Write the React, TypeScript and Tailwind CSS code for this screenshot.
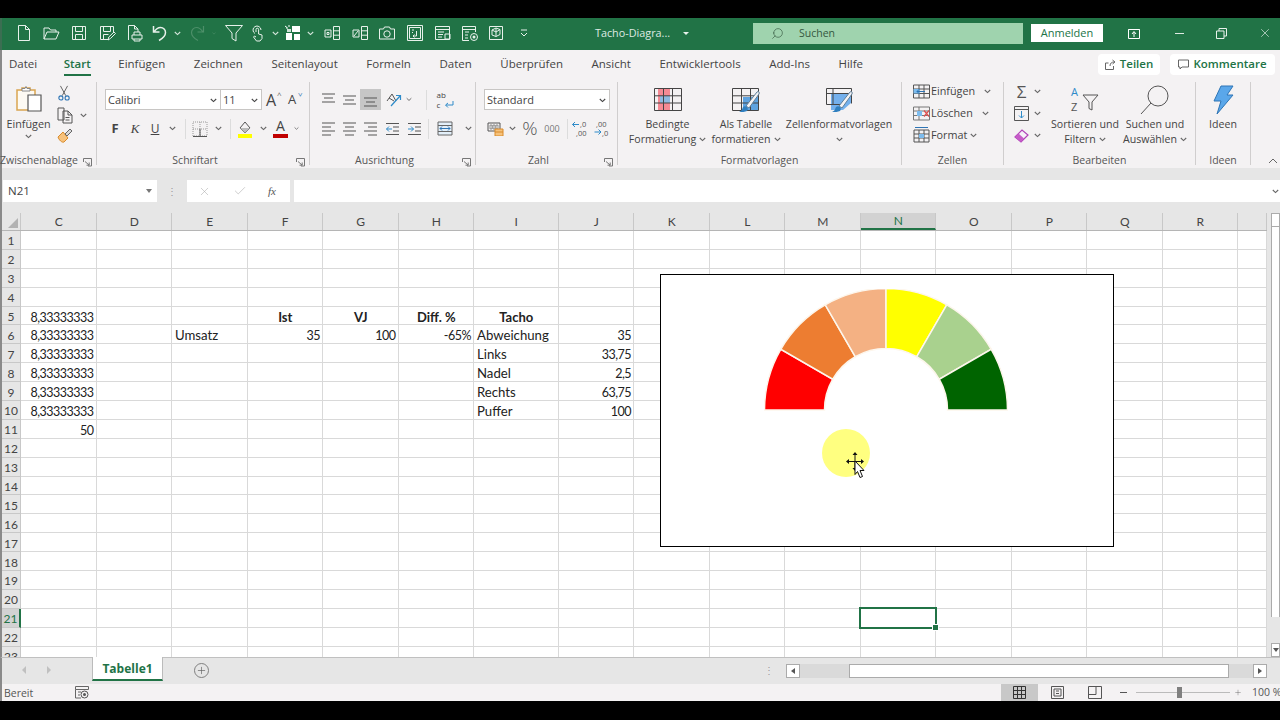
import type { ReactNode } from "react";
import { Check, Plus, Search, X } from "lucide-react";

const ui = "font-['Open_Sans','Noto_Sans',sans-serif]";
const sheetFont = "font-['Lato','Liberation_Sans',sans-serif]";

const columns = [
  { name: "C", cls: "w-[75.5px]" },
  { name: "D", cls: "w-[75.5px]" },
  { name: "E", cls: "w-[75.5px]" },
  { name: "F", cls: "w-[75.5px]" },
  { name: "G", cls: "w-[75.5px]" },
  { name: "H", cls: "w-[75.5px]" },
  { name: "I", cls: "w-[84.5px]" },
  { name: "J", cls: "w-[75.5px]" },
  { name: "K", cls: "w-[75.5px]" },
  { name: "L", cls: "w-[75.5px]" },
  { name: "M", cls: "w-[75.5px]" },
  { name: "N", cls: "w-[75.5px]" },
  { name: "O", cls: "w-[75.5px]" },
  { name: "P", cls: "w-[75.5px]" },
  { name: "Q", cls: "w-[75.5px]" },
  { name: "R", cls: "w-[75.5px]" },
  { name: "", cls: "w-[29px]" },
];

type Cell = { v: string; align?: "r" | "c"; bold?: boolean };

const cells: Record<string, Cell> = {
  C5: { v: "8,33333333", align: "r" },
  C6: { v: "8,33333333", align: "r" },
  C7: { v: "8,33333333", align: "r" },
  C8: { v: "8,33333333", align: "r" },
  C9: { v: "8,33333333", align: "r" },
  C10: { v: "8,33333333", align: "r" },
  C11: { v: "50", align: "r" },
  F5: { v: "Ist", align: "c", bold: true },
  G5: { v: "VJ", align: "c", bold: true },
  H5: { v: "Diff. %", align: "c", bold: true },
  I5: { v: "Tacho", align: "c", bold: true },
  E6: { v: "Umsatz" },
  F6: { v: "35", align: "r" },
  G6: { v: "100", align: "r" },
  H6: { v: "-65%", align: "r" },
  I6: { v: "Abweichung" },
  J6: { v: "35", align: "r" },
  I7: { v: "Links" },
  J7: { v: "33,75", align: "r" },
  I8: { v: "Nadel" },
  J8: { v: "2,5", align: "r" },
  I9: { v: "Rechts" },
  J9: { v: "63,75", align: "r" },
  I10: { v: "Puffer" },
  J10: { v: "100", align: "r" },
};

const tabs = ["Datei", "Start", "Einfügen", "Zeichnen", "Seitenlayout", "Formeln", "Daten", "Überprüfen", "Ansicht", "Entwicklertools", "Add-Ins", "Hilfe"];

const wedgeColors = ["#ff0000", "#ed7d31", "#f4b183", "#ffff00", "#a9d18e", "#006400"];

function wedge(i: number) {
  const cx = 122, cy = 121, R = 121.5, r = 61.5;
  const a0 = Math.PI - (i * Math.PI) / 6;
  const a1 = Math.PI - ((i + 1) * Math.PI) / 6;
  const p = (rad: number, a: number) => `${(cx + rad * Math.cos(a)).toFixed(2)} ${(cy - rad * Math.sin(a)).toFixed(2)}`;
  return `M${p(R, a0)}A${R} ${R} 0 0 1 ${p(R, a1)}L${p(r, a1)}A${r} ${r} 0 0 0 ${p(r, a0)}Z`;
}

function Chev({ cls = "text-[#666]" }: { cls?: string }) {
  return (
    <svg width="7" height="5" viewBox="0 0 7 5" className={cls}>
      <path d="M.8 1l2.7 2.6L6.2 1" fill="none" stroke="currentColor" strokeWidth="1.1" />
    </svg>
  );
}

function Launcher() {
  return (
    <svg width="9" height="9" viewBox="0 0 9 9" className="text-[#777]">
      <path d="M.5 4V.5h8V8H5M2 3.5l4 3.5M6.2 4.5v2.7H3.5" fill="none" stroke="currentColor" />
    </svg>
  );
}

function Ic({ w = 18, h = 18, vb = "0 0 18 18", children, cls = "" }: { w?: number; h?: number; vb?: string; children: ReactNode; cls?: string }) {
  return (
    <svg width={w} height={h} viewBox={vb} fill="none" className={`shrink-0 ${cls}`}>
      {children}
    </svg>
  );
}

const W = "#e8f1eb";

function QatIcon({ kind }: { kind: string }) {
  const s = { stroke: W, strokeWidth: 1 };
  switch (kind) {
    case "new":
      return <Ic><path d="M3.5 1.5h7l4 4v11h-11zM10.5 1.5v4h4" {...s} /></Ic>;
    case "open":
      return <Ic><path d="M2 15V4h5l1.5 2H14v2M2 15l3-7h12l-3 7z" {...s} /></Ic>;
    case "save":
      return <Ic><path d="M2.5 2.5h13v13h-13zM5.5 2.5v5h7v-5M5.5 15.5v-5h7v5" {...s} /></Ic>;
    case "saveas":
      return <Ic><path d="M11 15.5H2.5v-13h13V9M5.5 2.5v5h7v-5M5.5 15.5v-5h5M10 16l.8-3L16 8l1.5 1.5-5 5z" {...s} /></Ic>;
    case "print":
      return <Ic><path d="M3.5 16V1.5h6l3.5 3.5v3M9.5 1.5V5H13M7 11h10v4H7zM9 11V8h6v3M9 15v2h6v-2" {...s} /></Ic>;
    case "undo":
      return <Ic><path d="M2.5 2v6h6M3 8c2-3 4-4.500 6.500-4.500 3 0 5 2.500 5 5 0 3-2 5.500-6.500 8" stroke={W} strokeWidth="1.5" /></Ic>;
    case "redo":
      return <Ic><path d="M15.500 2v6h-6M15 8c-2-3-4-4.500-6.500-4.500-3 0-5 2.500-5 5 0 3 2 5.500 6.500 8" stroke="#4d8f69" strokeWidth="1.2" /></Ic>;
    case "filter":
      return <Ic w={20} h={20} vb="0 0 20 20"><path d="M1.500 2.500h17L12 10v8l-4-2.500V10z" {...s} /></Ic>;
    case "touch":
      return <Ic><path d="M6 9.500A4 4 0 1 1 12 6M7 8V5.500a1.300 1.300 0 0 1 2.600 0V10l3.400 1v3.500L11 17H7.500L4.500 13l1-1L7 13" {...s} /></Ic>;
    case "grid":
      return <Ic><path d="M5 1v2M2 4h2M1 2l2 1.500" stroke="#fff" /><path d="M8 2h8v6H8zM2 9h6v7H2zM10 10h6v6h-6z" fill="#fff" /><path d="M3 5h4v3H3z" fill="#cfe3d7" /></Ic>;
    case "sideL":
      return <Ic><path d="M10.500 2.500h6v13h-6zM10.500 6.800h6M10.500 11.200h6M2 6h6v7H2zM4 8.500h2v2H4z" {...s} /></Ic>;
    case "sideR":
      return <Ic><path d="M10.500 2.500h6v13h-6zM10.500 6.800h6M10.500 11.200h6M2 6h6v7H2zM3 12l4-5" {...s} /></Ic>;
    case "cam":
      return <Ic><path d="M1.500 5h4l1-2h5l1 2h4v10h-15z" {...s} /><circle cx="9" cy="10" r="3.200" {...s} /></Ic>;
    case "frame":
      return <Ic><path d="M1.500 1.500h15v15h-15zM3.500 3.500h11v11h-11zM6 6h2M6 8.500h1M10.500 7v5H7M7 12l1.500-1.500M7 12l1.500 1.500" {...s} /></Ic>;
    case "form":
      return <Ic><path d="M1.500 2.500h14v13h-14zM1.500 5.500h14M4 8h6M4 10.500h5M4 13h4M11 10h5v5h-5z" {...s} /></Ic>;
    case "macro":
      return <Ic><path d="M1.500 2.500h13V8M1.500 2.500v14H8M1.500 5.500h13M4 8h4M4 11h3M4 14h3" {...s} /><circle cx="13" cy="13" r="3.500" {...s} /><circle cx="13" cy="13" r="1.500" fill={W} /></Ic>;
    default:
      return <Ic><path d="M2.500 2.500h13v13h-13zM5 6l4-2 4 1.500v5L9 12.500 5 11zM9 4v8.500M5 6l4 2 4-2.500" {...s} /></Ic>;
  }
}

function Slot({ cls, children }: { cls: string; children?: ReactNode }) {
  return <div className={`flex items-center justify-center shrink-0 ${cls}`}>{children}</div>;
}

function Group({ cls, label, launcher, labelCls = "", children }: { cls: string; label: string; launcher?: boolean; labelCls?: string; children: ReactNode }) {
  return (
    <div className={`relative shrink-0 flex flex-col border-r border-[#d0cece] h-[83px] ${cls}`}>
      <div className="flex-1 min-h-0">{children}</div>
      <div className={`h-[15px] text-[10.5px] leading-[15px] text-[#555] text-center whitespace-nowrap translate-y-[3px] ${launcher ? "pr-[16px]" : ""} ${labelCls}`}>{label}</div>
      {launcher && <div className="absolute right-[4px] bottom-[-2px]"><Launcher /></div>}
    </div>
  );
}

function BigBtn({ cls, icon, l1, l2, chevOnly }: { cls: string; icon: ReactNode; l1: string; l2?: string; chevOnly?: boolean }) {
  return (
    <div className={`flex flex-col items-center shrink-0 ${cls}`}>
      <div className="h-[35px] flex items-center justify-center">{icon}</div>
      <div className="text-[10.6px] leading-[15px] text-[#444] whitespace-nowrap">{l1}</div>
      <div className="text-[10.6px] leading-[15px] text-[#444] whitespace-nowrap flex items-center gap-[3px] h-[15px]">
        {l2}
        {(l2 || chevOnly) && <Chev />}
      </div>
    </div>
  );
}

function AlignIcon({ kind }: { kind: "l" | "c" | "r" }) {
  const rows = kind === "l" ? ["M1 2h13", "M1 6h9", "M1 10h13", "M1 14h9"] : kind === "c" ? ["M1 2h13", "M3 6h9", "M1 10h13", "M3 14h9"] : ["M1 2h13", "M5 6h9", "M1 10h13", "M5 14h9"];
  return <Ic w={15} h={16} vb="0 0 15 16"><path d={rows.join("")} stroke="#555" strokeWidth="1.1" /></Ic>;
}

function VAlignIcon({ top }: { top: number }) {
  return <Ic w={15} h={14} vb="0 0 15 14"><path d={`M1 ${top}h13M3 ${top + 4}h9M1 ${top + 8}h13`} stroke="#555" strokeWidth="1.1" /></Ic>;
}

function StyleGrid({ kind }: { kind: "cond" | "table" | "cell" }) {
  return (
    <Ic w={30} h={26} vb="0 0 30 26">
      {kind === "cond" && <path d="M5 2h12v7h-6v7h6v7H5z" fill="#f58a94" />}
      {kind === "cond" && <path d="M7 9h10v7H7z" fill="#8fb9e0" />}
      {kind === "table" && <path d="M12 10h16v13H12z" fill="#5ea3e0" />}
      {kind === "cell" && <path d="M7 6h20v10l-8 7H7z" fill="#74b0ec" />}
      {kind === "cond" && <path d="M1.500 1.500h27v22h-27zM1.500 8.800h27M1.500 16h27M10.500 1.500v22M19.500 1.500v22" stroke="#444" />}
      {kind === "table" && <path d="M1.500 1.500h26v22h-26zM1.500 8.800h26M1.500 16h26M10.500 1.500v22M19.500 1.500v22" stroke="#444" />}
      {kind === "cell" && <path d="M2.500 1.500h25v15M2.500 1.500v16h14M2.500 6.500h25M9 1.500v16" stroke="#444" />}
      {kind !== "cond" && <path d="M15 19L26 5c1-1 3 0 2 2L18 21z" fill="#f4f2f3" stroke="#5e7f9a" />}
      {kind !== "cond" && <path d="M8 25c3-1 3-3 4-5 1-1 3-1 4 0s1 3 0 4c-2 1-5 1-8 1z" fill="#2f7fbf" />}
    </Ic>
  );
}

export default function App() {
  const rows = Array.from({ length: 23 }, (_, i) => i + 1);
  return (
    <div className={`w-[1280px] h-[720px] overflow-hidden bg-black flex flex-col ${ui}`}>
      <div className="h-[18px] shrink-0 bg-black" />

      {/* Titelleiste */}
      <div className="h-[32px] shrink-0 bg-[#217346] flex items-center pb-[2px] border-l-2 border-[#3b6e52]">
        <div className="w-[8px] shrink-0" />
        <Slot cls="w-[27px]"><QatIcon kind="new" /></Slot>
        <Slot cls="w-[27px]"><QatIcon kind="open" /></Slot>
        <Slot cls="w-[29px]"><QatIcon kind="save" /></Slot>
        <Slot cls="w-[27px]"><QatIcon kind="saveas" /></Slot>
        <Slot cls="w-[28px]"><QatIcon kind="print" /></Slot>
        <Slot cls="w-[24px]"><QatIcon kind="undo" /></Slot>
        <Slot cls="w-[10px]"><Chev cls="text-[#d6e6dc]" /></Slot>
        <Slot cls="w-[30px]"><QatIcon kind="redo" /></Slot>
        <Slot cls="w-[4px]"><Chev cls="text-[#4d8f69]" /></Slot>
        <Slot cls="w-[36px]"><QatIcon kind="filter" /></Slot>
        <Slot cls="w-[12px]"><QatIcon kind="touch" /></Slot>
        <Slot cls="w-[22px]"><Chev cls="text-[#d6e6dc]" /></Slot>
        <Slot cls="w-[14px]"><QatIcon kind="grid" /></Slot>
        <Slot cls="w-[20px]"><Chev cls="text-[#d6e6dc]" /></Slot>
        <Slot cls="w-[24px]"><QatIcon kind="sideL" /></Slot>
        <Slot cls="w-[32px]"><QatIcon kind="sideR" /></Slot>
        <Slot cls="w-[22px]"><QatIcon kind="cam" /></Slot>
        <Slot cls="w-[34px]"><QatIcon kind="frame" /></Slot>
        <Slot cls="w-[22px]"><QatIcon kind="form" /></Slot>
        <Slot cls="w-[32px]"><QatIcon kind="macro" /></Slot>
        <Slot cls="w-[20px]"><QatIcon kind="last" /></Slot>
        <Slot cls="w-[36px]">
          <svg width="8" height="8" viewBox="0 0 8 8"><path d="M1 1h6M1 4l3 3 3-3" stroke={W} fill="none" /></svg>
        </Slot>
        <div className="w-[53px] shrink-0" />
        <div className="w-[95px] shrink-0 text-[10.8px] text-[#dfeae3] whitespace-nowrap flex items-center gap-[13px]">
          Tacho-Diagra...
          <span className="w-0 h-0 border-x-[3px] border-x-transparent border-t-[3px] border-t-[#e8f1eb]" />
        </div>
        <div className="w-[63px] shrink-0" />
        <div className="w-[270px] h-[21px] shrink-0 bg-[#9fd3ae] flex items-center pl-[18px] gap-[15px] text-[10.5px] text-[#35573f]">
          <Search size={13} strokeWidth={1.2} className="text-[#35573f] -scale-x-100" />
          <span className="pt-[1px]">Suchen</span>
        </div>
        <div className="w-[8px] shrink-0" />
        <div className="w-[72px] h-[18px] shrink-0 bg-white text-[11px] text-[#217346] flex items-center justify-center">Anmelden</div>
        <Slot cls="w-[62px]">
          <svg width="12" height="11" viewBox="0 0 12 11" fill="none"><path d="M.5 1.500h11v9H.5zM.5 1.500h11" stroke="#fff" /><path d="M6 9V4M4 6l2-2.500L8 6" stroke="#fff" /></svg>
        </Slot>
        <Slot cls="w-[28px]"><div className="w-[9px] h-px bg-[#dfeae3]" /></Slot>
        <Slot cls="w-[56px]">
          <svg width="11" height="11" viewBox="0 0 11 11" fill="none"><path d="M.5 3h7.500v7.500H.5zM3 3V.5h7.500V8H8" stroke="#e8f1eb" /></svg>
        </Slot>
        <Slot cls="w-[32px]"><X size={14} strokeWidth={1} className="text-white" /></Slot>
      </div>

      {/* Menüband */}
      <div className="h-[118px] shrink-0 bg-[#f4f2f3] border-l-2 border-[#8a8a8a] flex flex-col">
        <div className="h-[32px] shrink-0 flex items-center pl-[7px] pb-[4px] gap-[28.5px] relative">
          {tabs.map((t) => (
            <div key={t} className={`relative text-[11.5px] whitespace-nowrap ${t === "Start" ? "text-[#217346] font-semibold -ml-[2px] -mr-[1px]" : "text-[#444]"}`}>
              {t}
              {t === "Start" && <div className="absolute left-0 right-0 bottom-[-3px] h-[2px] bg-[#217346]" />}
            </div>
          ))}
          <div className="ml-auto mr-[5px] flex gap-[10px]">
            <div className="w-[62px] h-[21px] bg-white rounded-sm flex items-center justify-center gap-[4px] text-[11.5px] font-semibold text-[#217346]">
              <svg width="11" height="11" viewBox="0 0 11 11" fill="none"><path d="M.5 4h3M.5 4v6.500h8V7M5 7c0-3 2-4 4-4M7.500 1l2.500 2-2.500 2" stroke="#666" /></svg>
              Teilen
            </div>
            <div className="w-[105px] h-[21px] bg-white rounded-sm flex items-center justify-center gap-[4px] text-[11.5px] font-semibold text-[#217346]">
              <svg width="11" height="11" viewBox="0 0 11 11" fill="none"><path d="M.5 1h10v7H4L2 10V8H.5z" stroke="#666" /></svg>
              Kommentare
            </div>
          </div>
        </div>

        <div className="flex mb-[3px]">
          {/* Zwischenablage */}
          <Group cls="w-[95px]" label="Zwischenablage" launcher labelCls="text-left -ml-[2px]">
            <div className="flex pt-[3px]">
              <div className="w-[53px] flex flex-col items-center">
                <svg width="28" height="28" viewBox="0 0 28 28" fill="none">
                  <path d="M2 5h5V3h8v2h5v20H2z" stroke="#d9a552" strokeWidth="1.500" fill="#fdfaf3" />
                  <path d="M7 6V3.500h3l1-2 1 2h3V6z" fill="#fff" stroke="#888" />
                  <path d="M13 10h13v16H13z" fill="#fff" stroke="#555" strokeWidth="1.200" />
                </svg>
                <div className="text-[10.8px] leading-[15px] text-[#444] mt-[3px]">Einfügen</div>
                <div className="h-[11px] flex items-center"><Chev /></div>
              </div>
              <div className="flex flex-col items-start pl-[2px]">
                <svg width="14" height="16" viewBox="0 0 14 18" fill="none"><path d="M3 1l6 11M11 1L5 12" stroke="#555" /><circle cx="3.500" cy="14.500" r="2.300" stroke="#2e75b5" strokeWidth="1.200" /><circle cx="10.500" cy="14.500" r="2.300" stroke="#2e75b5" strokeWidth="1.200" /></svg>
                <div className="flex items-center gap-[7px] mt-[6px]">
                  <svg width="16" height="17" viewBox="0 0 16 17" fill="none"><path d="M1 1h6v12H1zM6 4h5l4 4v8H6zM11 4v4h4M8.500 10.500h4M8.500 13h4" stroke="#555" fill="#f4f2f3" /></svg>
                  <Chev />
                </div>
                <svg width="16" height="16" viewBox="0 0 16 16" fill="none" className="mt-[4px]"><path d="M1 9l5-5 5 6-4 4c-2 1-5-2-6-5z" fill="#f7c27c" stroke="#d98a2a" /><path d="M8 6l5-5 2 2-5 5z" fill="#d8d8d8" stroke="#666" /></svg>
              </div>
            </div>
          </Group>

          {/* Schriftart */}
          <Group cls="w-[213px]" label="Schriftart" launcher>
            <div className="pt-[7px] pl-[8px]">
              <div className="flex items-center">
                <div className="w-[116px] h-[21px] bg-white border border-[#c8c6c4] flex items-center justify-between px-[2px] pt-[1px] text-[11px] text-[#444]">Calibri <Chev cls="text-[#444] mr-[1px]" /></div>
                <div className="w-[41px] h-[21px] bg-white border border-[#c8c6c4] border-l-0 flex items-center justify-between px-[2px] pt-[1px] text-[11px] text-[#444]">11 <Chev cls="text-[#444] mr-[1px]" /></div>
                <div className="ml-[4px] w-[21px] text-[16px] text-[#444] leading-none relative">A<span className="absolute left-[11px] top-[-1px] text-[8px] text-[#666]">^</span></div>
                <div className="w-[21px] text-[13px] text-[#444] leading-none relative ml-[1px]">A<span className="absolute left-[10px] top-[-3px] text-[8px] text-[#2e75b5] rotate-180">^</span></div>
              </div>
              <div className="flex items-center h-[21px] mt-[8px] text-[#444]">
                <Slot cls="w-[20px] text-[13px] font-bold">F</Slot>
                <Slot cls="w-[20px] text-[13px] italic font-['Liberation_Serif',serif]">K</Slot>
                <Slot cls="w-[20px] text-[12px] underline">U</Slot>
                <Slot cls="w-[14px]"><Chev /></Slot>
                <div className="w-[1px] h-[20px] bg-[#dcdcdc] ml-[6px]" />
                <Slot cls="w-[27px]">
                  <svg width="16" height="16" viewBox="0 0 16 16" fill="none"><path d="M1 1h14v14H1zM1 8h14M8 1v14" stroke="#999" strokeDasharray="1 1" /><path d="M1 15.500h14M8 8v7" stroke="#555" /></svg>
                </Slot>
                <Slot cls="w-[10px]"><Chev /></Slot>
                <div className="w-[1px] h-[20px] bg-[#dcdcdc] ml-[7px]" />
                <Slot cls="w-[28px]">
                  <svg width="16" height="18" viewBox="0 0 16 18" fill="none"><path d="M3 8l5-6 5 6-5 5z" stroke="#555" /><path d="M3 8h10l-5 5z" fill="#bbb" /><path d="M1 14h14v4H1z" fill="#ffff00" /></svg>
                </Slot>
                <Slot cls="w-[8px]"><Chev /></Slot>
                <Slot cls="w-[27px]">
                  <div className="flex flex-col items-center leading-none text-[14px]">A<div className="w-[15px] h-[4px] bg-[#c00000] mt-[1px]" /></div>
                </Slot>
                <Slot cls="w-[5px]"><Chev /></Slot>
              </div>
            </div>
          </Group>

          {/* Ausrichtung */}
          <Group cls="w-[166px]" label="Ausrichtung" launcher>
            <div className="pt-[7px] pl-[8px]">
              <div className="flex items-center h-[21px]">
                <Slot cls="w-[21px]"><VAlignIcon top={1} /></Slot>
                <Slot cls="w-[21px]"><VAlignIcon top={3} /></Slot>
                <Slot cls="w-[21px] h-[21px] bg-[#c6c6c6]"><VAlignIcon top={5} /></Slot>
                <Slot cls="w-[25px]">
                  <svg width="16" height="16" viewBox="0 0 16 16" fill="none"><path d="M1 9l5-7 4 7M3 6l5 3" stroke="#555" /><path d="M5 14L14 4M10 3.500h4.500V8" stroke="#2e8bc9" strokeWidth="1.200" /></svg>
                </Slot>
                <Slot cls="w-[6px]"><Chev /></Slot>
                <div className="w-[1px] h-[20px] bg-[#dcdcdc] ml-[14px]" />
                <Slot cls="w-[34px]">
                  <div className="relative w-[15px] h-[20px]">
                    <div className="text-[8px] leading-[10px] text-[#444]">ab<br />c</div>
                    <svg width="10" height="9" viewBox="0 0 10 9" fill="none" className="absolute right-[-2px] bottom-[1px]"><path d="M9 1v4H2M4 3L1.500 5 4 7.500" stroke="#2e8bc9" /></svg>
                  </div>
                </Slot>
              </div>
              <div className="flex items-center h-[21px] mt-[8px]">
                <Slot cls="w-[21px]"><AlignIcon kind="l" /></Slot>
                <Slot cls="w-[21px]"><AlignIcon kind="c" /></Slot>
                <Slot cls="w-[21px]"><AlignIcon kind="r" /></Slot>
                <Slot cls="w-[23px]">
                  <svg width="15" height="14" viewBox="0 0 15 14" fill="none"><path d="M1 1.500h13M1 12.500h13M8 5h6M8 9h6" stroke="#555" /><path d="M7 7H1.500M4 4.500L1.500 7 4 9.500" stroke="#2e8bc9" /></svg>
                </Slot>
                <Slot cls="w-[20px]">
                  <svg width="15" height="14" viewBox="0 0 15 14" fill="none"><path d="M1 1.500h13M1 12.500h13M8 5h6M8 9h6" stroke="#555" /><path d="M1 7h5.500M4 4.500L6.500 7 4 9.500" stroke="#2e8bc9" /></svg>
                </Slot>
                <div className="w-[1px] h-[20px] bg-[#dcdcdc] ml-[4px]" />
                <Slot cls="w-[31px]">
                  <svg width="16" height="15" viewBox="0 0 16 15" fill="none"><path d="M1 1h14v13H1z" fill="#e3eff9" stroke="#666" /><path d="M1 4.500h14M1 10.500h14" stroke="#666" /><path d="M3 7.500h10M5 5.500l-2 2 2 2M11 5.500l2 2-2 2" stroke="#2e75b5" /></svg>
                </Slot>
                <Slot cls="w-[7px] ml-[5px]"><Chev /></Slot>
              </div>
            </div>
          </Group>

          {/* Zahl */}
          <Group cls="w-[142px]" label="Zahl" launcher>
            <div className="pt-[7px] pl-[8px]">
              <div className="w-[126px] h-[21px] bg-white border border-[#c8c6c4] flex items-center justify-between px-[2px] pt-[1px] text-[11px] text-[#444]">Standard <Chev cls="text-[#444] mr-[1px]" /></div>
              <div className="flex items-center h-[21px] mt-[8px]">
                <Slot cls="w-[22px]">
                  <svg width="17" height="15" viewBox="0 0 17 15" fill="none"><path d="M1 2h12v8H1z" stroke="#555" /><path d="M3 4h2v4H3zM6 4h2v4H6zM9 4h2v4H9z" stroke="#555" strokeWidth=".6" /><path d="M8 8h8v7H8z" fill="#f6c27b" stroke="#d98a2a" /><path d="M8 11h8" stroke="#d98a2a" /></svg>
                </Slot>
                <Slot cls="w-[12px]"><Chev /></Slot>
                <Slot cls="w-[24px] text-[19px] font-light text-[#555] leading-none">%</Slot>
                <Slot cls="w-[20px] text-[9px] text-[#777]">000</Slot>
                <div className="w-[1px] h-[20px] bg-[#dcdcdc] ml-[5px]" />
                <Slot cls="w-[23px]">
                  <svg width="17" height="17" viewBox="0 0 17 17" fill="none">
                    <path d="M8 4.500H1.500M4 2L1.500 4.500 4 7" stroke="#2e8bc9" />
                    <text x="9" y="7" fontSize="7.500" fill="#555" fontFamily="Open Sans">,0</text>
                    <text x="5" y="15.500" fontSize="7.500" fill="#555" fontFamily="Open Sans">,00</text>
                  </svg>
                </Slot>
                <Slot cls="w-[21px]">
                  <svg width="17" height="17" viewBox="0 0 17 17" fill="none">
                    <text x="3" y="7" fontSize="7.500" fill="#555" fontFamily="Open Sans">,00</text>
                    <path d="M1.500 12H8M5.500 9.500L8 12l-2.500 2.500" stroke="#2e8bc9" />
                    <text x="9" y="15.500" fontSize="7.500" fill="#555" fontFamily="Open Sans">,0</text>
                  </svg>
                </Slot>
              </div>
            </div>
          </Group>

          {/* Formatvorlagen */}
          <Group cls="w-[284px]" label="Formatvorlagen">
            <div className="flex pl-[9px]">
              <BigBtn cls="w-[81px]" icon={<StyleGrid kind="cond" />} l1="Bedingte" l2="Formatierung" />
              <BigBtn cls="w-[78px] ml-[-1px]" icon={<StyleGrid kind="table" />} l1="Als Tabelle" l2="formatieren" />
              <BigBtn cls="w-[108px]" icon={<StyleGrid kind="cell" />} l1="Zellenformatvorlagen" chevOnly />
            </div>
          </Group>

          {/* Zellen */}
          <Group cls="w-[102px]" label="Zellen">
            <div className="pt-[1px] pl-[11px] flex flex-col gap-[6px]">
              <div className="flex items-center h-[16px] text-[10.8px] text-[#444]">
                <svg width="17" height="15" viewBox="0 0 17 15" fill="none"><path d="M.5 1h16v13H.5zM.5 5h16M.5 9.500h16M6 1v13M11 1v13" stroke="#555" /><path d="M.5 5h6v4.500h-6z" fill="#7dbcee" /><path d="M12 7.500H4M6.500 5L4 7.500 6.500 10" stroke="#2e75b5" /></svg>
                <span className="ml-[1px] w-[53px]">Einfügen</span><Chev />
              </div>
              <div className="flex items-center h-[16px] text-[10.8px] text-[#444]">
                <svg width="17" height="15" viewBox="0 0 17 15" fill="none"><path d="M.5 1h16v13H.5zM.5 5h16M.5 9.500h16M6 1v13" stroke="#777" /><path d="M4 5h5v5H4z" fill="#7dbcee" /><path d="M11 4.500l5 6M16 4.500l-5 6" stroke="#e05050" strokeWidth="1.200" /></svg>
                <span className="ml-[1px] w-[51px]">Löschen</span><Chev />
              </div>
              <div className="flex items-center h-[16px] text-[10.8px] text-[#444]">
                <svg width="17" height="16" viewBox="0 0 17 16" fill="none"><path d="M1 3h15v12H1zM1 7h15M1 11h15M6 3v12M11 3v12" stroke="#555" /><path d="M6 7h5v4H6z" fill="#7dbcee" /><path d="M2 .5h13" stroke="#2e75b5" /></svg>
                <span className="ml-[1px] mr-[3px]">Format</span><Chev />
              </div>
            </div>
          </Group>

          {/* Bearbeiten */}
          <Group cls="w-[192px]" label="Bearbeiten">
            <div className="flex pl-[10px]">
              <div className="w-[36px] flex flex-col pt-[1px] gap-[6px]">
                <div className="flex items-center h-[16px] gap-[5px]"><span className="w-[15px] text-center text-[17px] leading-none text-[#555]">Σ</span><Chev /></div>
                <div className="flex items-center h-[16px] gap-[5px]">
                  <svg width="15" height="15" viewBox="0 0 15 15" fill="none"><path d="M.5 .5h14v14H.5zM.5 3.500h14" stroke="#555" /><path d="M7.500 5v7M5 9.500L7.500 12 10 9.500" stroke="#2e8bc9" /></svg>
                  <Chev />
                </div>
                <div className="flex items-center h-[16px] gap-[5px]">
                  <svg width="15" height="15" viewBox="0 0 15 15" fill="none"><path d="M1 9l7-7 6 5-7 7z" fill="#f5f0f8" stroke="#b040b8" strokeWidth="1.200" /><path d="M1 9l3.500-3.500 5.500 5L7 14z" fill="#c65cc8" /></svg>
                  <Chev />
                </div>
              </div>
              <BigBtn cls="w-[74px] ml-[-2px]" icon={
                <svg width="34" height="30" viewBox="0 0 34 30" fill="none">
                  <text x="3" y="11" fontSize="11" fill="#2e8bc9" fontFamily="Open Sans">A</text>
                  <text x="3" y="26" fontSize="11" fill="#555" fontFamily="Open Sans">Z</text>
                  <path d="M15 10h15l-6 7v8l-3-1.500V17z" stroke="#555" />
                </svg>
              } l1="Sortieren und" l2="Filtern" />
              <BigBtn cls="w-[68px] ml-[-1px]" icon={
                <svg width="30" height="32" viewBox="0 0 30 32" fill="none"><circle cx="18" cy="12" r="10" stroke="#555" /><path d="M11 19L1 30" stroke="#555" /></svg>
              } l1="Suchen und" l2="Auswählen" />
            </div>
          </Group>

          {/* Ideen */}
          <Group cls="w-[55px]" label="Ideen">
            <div className="flex justify-center">
              <BigBtn cls="w-[40px]" icon={
                <svg width="22" height="30" viewBox="0 0 22 30" fill="none"><path d="M9 1h12l-6 9h6L5 29l4-13H2z" fill="#5aa7ea" stroke="#2e75b5" /></svg>
              } l1="Ideen" />
            </div>
          </Group>

          <div className="flex-1 flex items-end justify-end pr-[2px] pb-[1px]">
            <svg width="10" height="6" viewBox="0 0 10 6" fill="none"><path d="M1 5l4-4 4 4" stroke="#666" /></svg>
          </div>
        </div>
      </div>

      {/* Bearbeitungsleiste */}
      <div className="h-[45px] shrink-0 bg-[#e6e6e6] border-l-2 border-[#8a8a8a] flex items-start pt-[12px] pl-[1px]">
        <div className="w-[154px] h-[22px] bg-white flex items-center justify-between pl-[5px] pr-[5px] text-[11.5px] text-[#444]">
          N21
          <span className="w-0 h-0 border-x-[3.500px] border-x-transparent border-t-[4px] border-t-[#777]" />
        </div>
        <div className="w-[30px] h-[22px] flex items-center justify-center text-[#999] text-[10px]">⋮</div>
        <div className="w-[103px] h-[22px] bg-white flex items-center pl-[11px] text-[#aaa]">
          <X size={13} strokeWidth={1} />
          <Check size={14} strokeWidth={1} className="ml-[22px]" />
          <span className="ml-[21px] text-[11px] italic text-[#555] font-['Liberation_Serif',serif]">fx</span>
        </div>
        <div className="w-[4px] shrink-0" />
        <div className="flex-1 h-[22px] bg-white flex items-center justify-end pr-[1px]"><Chev /></div>
      </div>

      {/* Tabelle */}
      <div className="relative h-[444px] shrink-0 bg-white border-l-2 border-[#8a8a8a] flex overflow-hidden">
        <div className={`w-[1265px] shrink-0 ${sheetFont}`}>
          <div className="flex h-[18px] bg-[#e6e6e6] border-b border-[#b5b5b5]">
            <div className="w-[19px] shrink-0 border-r border-[#c8c8c8] relative">
              <span className="absolute right-[2px] bottom-[2px] w-0 h-0 border-l-[10px] border-l-transparent border-b-[10px] border-b-[#b2b2b2]" />
            </div>
            {columns.map((c) => (
              <div key={c.name} className={`${c.cls} shrink-0 box-border flex items-center justify-center pl-[1px] text-[12px] border-r border-[#c8c8c8] ${c.name === "N" ? "bg-[#d2d2d2] border-b-2 border-b-[#217346] text-[#217346]" : "text-[#444]"}`}>{c.name}</div>
            ))}
          </div>
          {rows.map((r) => (
            <div key={r} className="flex h-[18.9px]">
              <div className={`w-[19px] shrink-0 box-border flex items-center justify-center pt-[3px] text-[12px] border-b border-r border-[#c8c8c8] ${r === 21 ? "bg-[#d2d2d2] border-r-2 border-r-[#217346] text-[#217346]" : "bg-[#e6e6e6] text-[#444]"}`}>{r}</div>
              {columns.map((c) => {
                const cell = cells[c.name + r];
                return (
                  <div key={c.name} className={`${c.cls} shrink-0 box-border border-b border-r border-[#d9d9d9] pl-[3px] pr-[2px] leading-[21px] text-[#222] whitespace-nowrap ${cell?.align === "r" ? "text-right text-[12.5px] tracking-[-0.5px]" : cell?.align === "c" ? "text-center text-[13px]" : "text-left text-[13.2px]"} ${cell?.bold ? "font-bold" : ""}`}>
                    {cell?.v}
                  </div>
                );
              })}
            </div>
          ))}
        </div>

        {/* Bildlaufleiste */}
        <div className="flex-1 bg-[#e6e6e6] flex flex-col items-end">
          <div className="w-[9px] h-[14px] bg-white border border-[#ababab]" />
          <div className="w-[9px] flex-1 min-h-0 flex flex-col">
            <div className="h-[390px] bg-white border-x border-[#ababab]" />
            <div className="flex-1" />
          </div>
          <div className="w-[9px] h-[14px] bg-white border border-[#ababab] flex items-center justify-center">
            <span className="w-0 h-0 border-x-[3px] border-x-transparent border-t-[4px] border-t-[#555]" />
          </div>
        </div>

        {/* Diagramm */}
        <div className="absolute left-[658px] top-[61px] w-[454px] h-[273px] bg-white border border-black">
          <svg width="244" height="124" viewBox="0 0 244 124" className="absolute left-[103px] top-[14px]">
            {wedgeColors.map((c, i) => (
              <path key={c} d={wedge(i)} fill={c} stroke="#fdf6ec" strokeWidth="1.500" />
            ))}
          </svg>
          <div className="absolute left-[161px] top-[154px] w-[48px] h-[48px] rounded-full bg-[#ffff80]" />
          <svg width="24" height="30" viewBox="0 0 24 30" className="absolute left-[184px] top-[177px]">
            <path d="M2 9.500h16M10 1.500v16" stroke="#111" strokeWidth="1" />
            <path d="M10 0l2.500 3h-5zM10 19l2.500-3h-5zM1 9.500l3-2.500v5zM19 9.500l-3-2.500v5z" fill="#111" />
            <path d="M10 9l9 9.500h-4l2.500 6-2.500 1-2.500-6-2.500 3z" fill="#fff" stroke="#111" />
          </svg>
        </div>

        {/* Auswahl N21 */}
        <div className="absolute left-[857px] top-[394px] w-[78px] h-[22px] border-2 border-[#217346]">
          <div className="absolute right-[-4px] bottom-[-4px] w-[5px] h-[5px] bg-[#217346] border border-white box-content" />
        </div>
      </div>

      {/* Blattregister */}
      <div className="h-[27px] shrink-0 bg-[#e6e6e6] border-l-2 border-[#8a8a8a] border-t border-t-[#c0c0c0] flex items-start">
        <div className="w-[90px] h-[24px] shrink-0 flex items-center pl-[20px] gap-[21px] text-[#c0c0c0]">
          <span className="w-0 h-0 border-y-[4px] border-y-transparent border-r-[4px] border-r-[#c0c0c0]" />
          <span className="w-0 h-0 border-y-[4px] border-y-transparent border-l-[4px] border-l-[#c0c0c0]" />
        </div>
        <div className="w-[71px] h-[24px] mt-[-1px] pt-[2px] bg-white border-x border-[#bbb] border-b-2 border-b-[#217346] shrink-0 flex items-center justify-center text-[12px] font-bold text-[#217346]">Tabelle1</div>
        <div className="w-[77px] h-[24px] shrink-0 flex items-center justify-center">
          <div className="w-[15px] h-[15px] rounded-full border border-[#808080] flex items-center justify-center"><Plus size={11} strokeWidth={1.500} className="text-[#666]" /></div>
        </div>
        <div className="w-[546px] shrink-0 h-[24px] flex items-center justify-end pr-[12px]">
          <span className="text-[#9a9a9a] text-[10px]">⋮</span>
        </div>
        <div className="flex items-center mt-[6px]">
          <div className="w-[14px] h-[14px] bg-white border border-[#ababab] flex items-center justify-center">
            <span className="w-0 h-0 border-y-[3.500px] border-y-transparent border-r-[4px] border-r-[#555]" />
          </div>
          <div className="w-[49px] h-[14px] bg-[#dadada]" />
          <div className="w-[380px] h-[14px] bg-white border border-[#ababab]" />
          <div className="w-[24px] h-[14px] bg-[#dadada]" />
          <div className="w-[14px] h-[14px] bg-white border border-[#ababab] flex items-center justify-center">
            <span className="w-0 h-0 border-y-[3.500px] border-y-transparent border-l-[4px] border-l-[#555]" />
          </div>
        </div>
      </div>

      {/* Statusleiste */}
      <div className="h-[17px] shrink-0 bg-[#f4f2f3] border-l-2 border-[#8a8a8a] flex items-center text-[10.5px] text-[#555]">
        <div className="w-[73px] pl-[2px] pt-[2px] shrink-0">Bereit</div>
        <svg width="14" height="13" viewBox="0 0 14 13" fill="none" className="shrink-0"><path d="M.5 .5h13v3h-13zM.5 3.500V12H6M3 6h3M3 9h2" stroke="#666" /><circle cx="9.500" cy="8.500" r="3.500" stroke="#555" /><circle cx="9.500" cy="8.500" r="1.500" fill="#555" /></svg>
        <div className="w-[912px] shrink-0" />
        <div className="w-[37px] h-[17px] shrink-0 bg-[#c8c8c8] flex items-center justify-center">
          <svg width="13" height="13" viewBox="0 0 13 13" fill="none"><path d="M.5 .5h12v12H.5zM.5 4.500h12M.5 8.500h12M4.500 .5v12M8.500 .5v12" stroke="#333" /></svg>
        </div>
        <Slot cls="w-[38px]">
          <svg width="13" height="13" viewBox="0 0 13 13" fill="none"><path d="M.5 .5h12v12H.5zM3 3h7v7H3zM5 5h3M5 7.500h3" stroke="#555" /></svg>
        </Slot>
        <Slot cls="w-[38px]">
          <svg width="14" height="13" viewBox="0 0 14 13" fill="none"><path d="M.5 .5h13v12H.5zM.5 8.500H8V.5" stroke="#555" /></svg>
        </Slot>
        <Slot cls="w-[18px]"><div className="w-[7px] h-px bg-[#555]" /></Slot>
        <div className="w-[94px] shrink-0 h-px bg-[#bbb] relative mx-[4px]">
          <div className="absolute left-[41px] top-[-5px] w-[5px] h-[11px] bg-[#808080]" />
        </div>
        <Slot cls="w-[8px]"><Plus size={9} strokeWidth={1.200} className="text-[#555]" /></Slot>
        <div className="ml-[10px] whitespace-nowrap">100 %</div>
      </div>

      <div className="flex-1 bg-black" />
    </div>
  );
}
